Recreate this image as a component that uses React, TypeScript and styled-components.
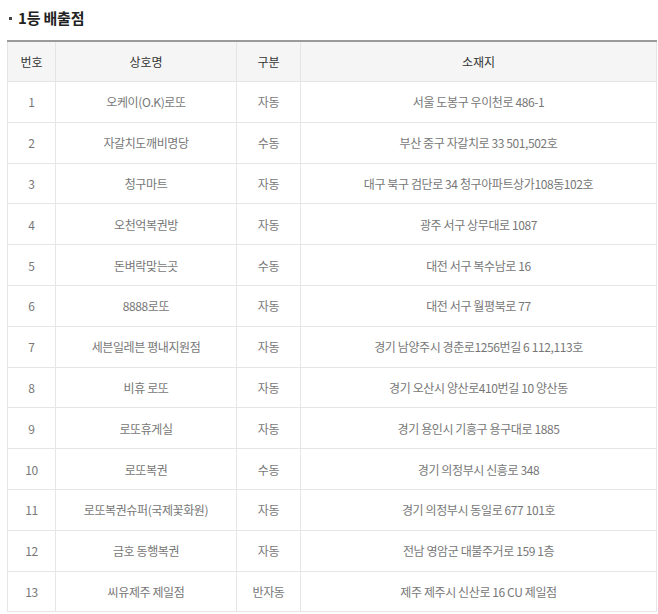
import React from 'react';
import styled, {createGlobalStyle} from 'styled-components';

const GlobalStyle = createGlobalStyle`
  html, body {
    margin: 0;
    padding: 0;
    background: #fff;
  }
  body {
    font-family: "Noto Sans CJK KR", "Noto Sans", sans-serif;
  }
`;

const Wrapper = styled.div`
  width: 658px;
  padding: 5px 1px 0 7px;
  box-sizing: border-box;
`;

const Title = styled.h3`
  margin: 0 0 11px 0;
  height: 24px;
  font-size: 15px;
  font-weight: 700;
  color: #222;
  display: flex;
  align-items: center;
  letter-spacing: -0.2px;
`;

const Dot = styled.span`
  width: 3px;
  height: 3px;
  background: #444;
  margin: 2px 6px 0 2px;
`;

const Table = styled.table`
  width: 650px;
  border-collapse: collapse;
  table-layout: fixed;
  border-top: 2px solid #9a9a9a;
  border-left: 1px solid #ececec;
  border-right: 1px solid #ececec;
  border-bottom: 1px solid #e2e2e2;
`;

const Th = styled.th`
  height: 39px;
  padding: 0;
  background: #f5f5f5;
  border: 1px solid #e4e4e4;
  border-top: none;
  font-size: 12px;
  font-weight: 400;
  color: #333;
  text-align: center;
`;

const Td = styled.td`
  height: 39.8px;
  padding: 0;
  border: 1px solid #e6e6e6;
  font-size: 12px;
  color: #777;
  text-align: center;
  letter-spacing: -0.4px;
  white-space: nowrap;
`;

const rows: [string, string, string][] = [
  ['오케이(O.K)로또', '자동', '서울 도봉구 우이천로 486-1'],
  ['자갈치도깨비명당', '수동', '부산 중구 자갈치로 33 501,502호'],
  ['청구마트', '자동', '대구 북구 검단로 34 청구아파트상가108동102호'],
  ['오천억복권방', '자동', '광주 서구 상무대로 1087'],
  ['돈벼락맞는곳', '수동', '대전 서구 복수남로 16'],
  ['8888로또', '자동', '대전 서구 월평북로 77'],
  ['세븐일레븐 평내지원점', '자동', '경기 남양주시 경춘로1256번길 6 112,113호'],
  ['비휴 로또', '자동', '경기 오산시 양산로410번길 10 양산동'],
  ['로또휴게실', '자동', '경기 용인시 기흥구 용구대로 1885'],
  ['로또복권', '수동', '경기 의정부시 신흥로 348'],
  ['로또복권슈퍼(국제꽃화원)', '자동', '경기 의정부시 동일로 677 101호'],
  ['금호 동행복권', '자동', '전남 영암군 대불주거로 159 1층'],
  ['씨유제주 제일점', '반자동', '제주 제주시 신산로 16 CU 제일점'],
];

export default function App() {
  return (
    <Wrapper>
      <GlobalStyle />
      <Title>
        <Dot />
        1등 배출점
      </Title>
      <Table>
        <colgroup>
          <col style={{width: 48}} />
          <col style={{width: 181}} />
          <col style={{width: 64}} />
          <col />
        </colgroup>
        <thead>
          <tr>
            <Th>번호</Th>
            <Th>상호명</Th>
            <Th>구분</Th>
            <Th>소재지</Th>
          </tr>
        </thead>
        <tbody>
          {rows.map(([name, kind, addr], i) => (
            <tr key={i}>
              <Td>{i + 1}</Td>
              <Td>{name}</Td>
              <Td>{kind}</Td>
              <Td>{addr}</Td>
            </tr>
          ))}
        </tbody>
      </Table>
    </Wrapper>
  );
}
